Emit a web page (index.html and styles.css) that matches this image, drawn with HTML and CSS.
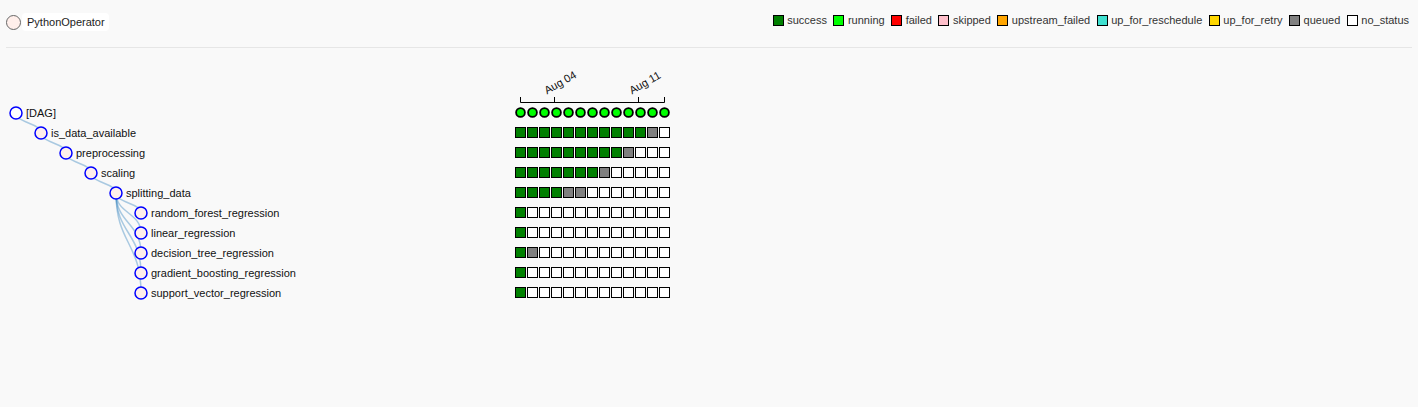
FILE: index.html
```html
<!DOCTYPE html>
<html lang="en">
<head>
<meta charset="utf-8">
<title>Tree View</title>
<link rel="stylesheet" href="styles.css">
</head>
<body>
<header class="top">
  <div class="op">
    <span class="op-dot"></span>
    <span class="op-name">PythonOperator</span>
  </div>
  <ul class="legend">
    <li class="item"><span class="sq st-success"></span>success</li>
    <li class="item"><span class="sq st-running"></span>running</li>
    <li class="item"><span class="sq st-failed"></span>failed</li>
    <li class="item"><span class="sq st-skipped"></span>skipped</li>
    <li class="item"><span class="sq st-upstream"></span>upstream_failed</li>
    <li class="item"><span class="sq st-resched"></span>up_for_reschedule</li>
    <li class="item"><span class="sq st-retry"></span>up_for_retry</li>
    <li class="item"><span class="sq st-queued"></span>queued</li>
    <li class="item"><span class="sq st-none"></span>no_status</li>
  </ul>
</header>
<hr class="rule">
<svg class="tree" width="1418" height="359" viewBox="0 48 1418 359">
  <g class="links">
    <path d="M16,113C16,123 41,123 41,133"/>
    <path d="M41,133C41,143 66,143 66,153"/>
    <path d="M66,153C66,163 91,163 91,173"/>
    <path d="M91,173C91,183 116,183 116,193"/>
    <path d="M116,193C116,203 141,203 141,213"/>
    <path d="M116,193C116,213 141,213 141,233"/>
    <path d="M116,193C116,223 141,223 141,253"/>
    <path d="M116,193C116,233 141,233 141,273"/>
    <path d="M116,193C116,243 141,243 141,293"/>
  </g>
  <g class="nodes">
    <circle class="node dag" cx="16" cy="113" r="6"/>
    <text class="label" x="26" y="117">[DAG]</text>
    <circle class="node" cx="41" cy="133" r="6"/>
    <text class="label" x="51" y="137">is_data_available</text>
    <circle class="node" cx="66" cy="153" r="6"/>
    <text class="label" x="76" y="157">preprocessing</text>
    <circle class="node" cx="91" cy="173" r="6"/>
    <text class="label" x="101" y="177">scaling</text>
    <circle class="node" cx="116" cy="193" r="6"/>
    <text class="label" x="126" y="197">splitting_data</text>
    <circle class="node" cx="141" cy="213" r="6"/>
    <text class="label" x="151" y="217">random_forest_regression</text>
    <circle class="node" cx="141" cy="233" r="6"/>
    <text class="label" x="151" y="237">linear_regression</text>
    <circle class="node" cx="141" cy="253" r="6"/>
    <text class="label" x="151" y="257">decision_tree_regression</text>
    <circle class="node" cx="141" cy="273" r="6"/>
    <text class="label" x="151" y="277">gradient_boosting_regression</text>
    <circle class="node" cx="141" cy="293" r="6"/>
    <text class="label" x="151" y="297">support_vector_regression</text>
  </g>
  <g class="axis">
    <path class="domain" d="M520.5,97V102.5H664.5V97"/>
    <path class="tick" d="M554.5,97V102.5M638.5,97V102.5"/>
    <text class="tick-label" transform="translate(547,94.5) rotate(-30)">Aug 04</text>
    <text class="tick-label" transform="translate(632,94.5) rotate(-30)">Aug 11</text>
  </g>
  <g class="runs">
    <circle class="run" cx="520.5" cy="112.5" r="4.4"/>
    <circle class="run" cx="532.5" cy="112.5" r="4.4"/>
    <circle class="run" cx="544.5" cy="112.5" r="4.4"/>
    <circle class="run" cx="556.5" cy="112.5" r="4.4"/>
    <circle class="run" cx="568.5" cy="112.5" r="4.4"/>
    <circle class="run" cx="580.5" cy="112.5" r="4.4"/>
    <circle class="run" cx="592.5" cy="112.5" r="4.4"/>
    <circle class="run" cx="604.5" cy="112.5" r="4.4"/>
    <circle class="run" cx="616.5" cy="112.5" r="4.4"/>
    <circle class="run" cx="628.5" cy="112.5" r="4.4"/>
    <circle class="run" cx="640.5" cy="112.5" r="4.4"/>
    <circle class="run" cx="652.5" cy="112.5" r="4.4"/>
    <circle class="run" cx="664.5" cy="112.5" r="4.4"/>
  </g>
  <g class="grid">
    <g transform="translate(515.5,127.5)">
      <rect class="ti ok" x="0" y="0"/><rect class="ti ok" x="12" y="0"/><rect class="ti ok" x="24" y="0"/><rect class="ti ok" x="36" y="0"/><rect class="ti ok" x="48" y="0"/><rect class="ti ok" x="60" y="0"/><rect class="ti ok" x="72" y="0"/><rect class="ti ok" x="84" y="0"/><rect class="ti ok" x="96" y="0"/><rect class="ti ok" x="108" y="0"/><rect class="ti ok" x="120" y="0"/><rect class="ti qd" x="132" y="0"/><rect class="ti no" x="144" y="0"/>
    </g>
    <g transform="translate(515.5,147.5)">
      <rect class="ti ok" x="0" y="0"/><rect class="ti ok" x="12" y="0"/><rect class="ti ok" x="24" y="0"/><rect class="ti ok" x="36" y="0"/><rect class="ti ok" x="48" y="0"/><rect class="ti ok" x="60" y="0"/><rect class="ti ok" x="72" y="0"/><rect class="ti ok" x="84" y="0"/><rect class="ti ok" x="96" y="0"/><rect class="ti qd" x="108" y="0"/><rect class="ti no" x="120" y="0"/><rect class="ti no" x="132" y="0"/><rect class="ti no" x="144" y="0"/>
    </g>
    <g transform="translate(515.5,167.5)">
      <rect class="ti ok" x="0" y="0"/><rect class="ti ok" x="12" y="0"/><rect class="ti ok" x="24" y="0"/><rect class="ti ok" x="36" y="0"/><rect class="ti ok" x="48" y="0"/><rect class="ti ok" x="60" y="0"/><rect class="ti ok" x="72" y="0"/><rect class="ti qd" x="84" y="0"/><rect class="ti no" x="96" y="0"/><rect class="ti no" x="108" y="0"/><rect class="ti no" x="120" y="0"/><rect class="ti no" x="132" y="0"/><rect class="ti no" x="144" y="0"/>
    </g>
    <g transform="translate(515.5,187.5)">
      <rect class="ti ok" x="0" y="0"/><rect class="ti ok" x="12" y="0"/><rect class="ti ok" x="24" y="0"/><rect class="ti ok" x="36" y="0"/><rect class="ti qd" x="48" y="0"/><rect class="ti qd" x="60" y="0"/><rect class="ti no" x="72" y="0"/><rect class="ti no" x="84" y="0"/><rect class="ti no" x="96" y="0"/><rect class="ti no" x="108" y="0"/><rect class="ti no" x="120" y="0"/><rect class="ti no" x="132" y="0"/><rect class="ti no" x="144" y="0"/>
    </g>
    <g transform="translate(515.5,207.5)">
      <rect class="ti ok" x="0" y="0"/><rect class="ti no" x="12" y="0"/><rect class="ti no" x="24" y="0"/><rect class="ti no" x="36" y="0"/><rect class="ti no" x="48" y="0"/><rect class="ti no" x="60" y="0"/><rect class="ti no" x="72" y="0"/><rect class="ti no" x="84" y="0"/><rect class="ti no" x="96" y="0"/><rect class="ti no" x="108" y="0"/><rect class="ti no" x="120" y="0"/><rect class="ti no" x="132" y="0"/><rect class="ti no" x="144" y="0"/>
    </g>
    <g transform="translate(515.5,227.5)">
      <rect class="ti ok" x="0" y="0"/><rect class="ti no" x="12" y="0"/><rect class="ti no" x="24" y="0"/><rect class="ti no" x="36" y="0"/><rect class="ti no" x="48" y="0"/><rect class="ti no" x="60" y="0"/><rect class="ti no" x="72" y="0"/><rect class="ti no" x="84" y="0"/><rect class="ti no" x="96" y="0"/><rect class="ti no" x="108" y="0"/><rect class="ti no" x="120" y="0"/><rect class="ti no" x="132" y="0"/><rect class="ti no" x="144" y="0"/>
    </g>
    <g transform="translate(515.5,247.5)">
      <rect class="ti ok" x="0" y="0"/><rect class="ti qd" x="12" y="0"/><rect class="ti no" x="24" y="0"/><rect class="ti no" x="36" y="0"/><rect class="ti no" x="48" y="0"/><rect class="ti no" x="60" y="0"/><rect class="ti no" x="72" y="0"/><rect class="ti no" x="84" y="0"/><rect class="ti no" x="96" y="0"/><rect class="ti no" x="108" y="0"/><rect class="ti no" x="120" y="0"/><rect class="ti no" x="132" y="0"/><rect class="ti no" x="144" y="0"/>
    </g>
    <g transform="translate(515.5,267.5)">
      <rect class="ti ok" x="0" y="0"/><rect class="ti no" x="12" y="0"/><rect class="ti no" x="24" y="0"/><rect class="ti no" x="36" y="0"/><rect class="ti no" x="48" y="0"/><rect class="ti no" x="60" y="0"/><rect class="ti no" x="72" y="0"/><rect class="ti no" x="84" y="0"/><rect class="ti no" x="96" y="0"/><rect class="ti no" x="108" y="0"/><rect class="ti no" x="120" y="0"/><rect class="ti no" x="132" y="0"/><rect class="ti no" x="144" y="0"/>
    </g>
    <g transform="translate(515.5,287.5)">
      <rect class="ti ok" x="0" y="0"/><rect class="ti no" x="12" y="0"/><rect class="ti no" x="24" y="0"/><rect class="ti no" x="36" y="0"/><rect class="ti no" x="48" y="0"/><rect class="ti no" x="60" y="0"/><rect class="ti no" x="72" y="0"/><rect class="ti no" x="84" y="0"/><rect class="ti no" x="96" y="0"/><rect class="ti no" x="108" y="0"/><rect class="ti no" x="120" y="0"/><rect class="ti no" x="132" y="0"/><rect class="ti no" x="144" y="0"/>
    </g>
  </g>
</svg>
</body>
</html>
```
FILE: styles.css
```css
html, body {
  margin: 0;
  padding: 0;
  background: #f9f9f9;
  font-family: "Liberation Sans", Arial, Helvetica, sans-serif;
  font-size: 11px;
  color: #333;
}

.top {
  box-sizing: border-box;
  height: 47px;
  padding: 13px 9px 0 6px;
  display: flex;
  justify-content: space-between;
  align-items: flex-start;
}

.op {
  display: flex;
  align-items: center;
  height: 18px;
}

.op-dot {
  width: 13px;
  height: 13px;
  border: 1px solid #666;
  border-radius: 50%;
  background: #ffefeb;
}

.op-name {
  margin-left: 1px;
  padding: 0 4px 0 5px;
  line-height: 18px;
  background: #fff;
  border-radius: 4px;
  color: #222;
}

.legend {
  list-style: none;
  margin: 0;
  padding: 0;
  display: flex;
  gap: 6.5px;
}

.item {
  display: flex;
  align-items: center;
  gap: 3.5px;
  line-height: 14px;
  color: #333;
}

.sq {
  width: 9px;
  height: 9px;
  border: 1px solid #000;
}

.st-success { background: #008000; }
.st-running { background: #00ff00; }
.st-failed { background: #ff0000; }
.st-skipped { background: #ffc0cb; }
.st-upstream { background: #ffa500; }
.st-resched { background: #40e0d0; }
.st-retry { background: #ffd700; }
.st-queued { background: #808080; }
.st-none { background: #fff; }

.rule {
  margin: 0 6px;
  height: 0;
  border: 0;
  border-top: 1px solid #e6e6e6;
}

.tree {
  display: block;
}

.links path {
  fill: none;
  stroke: #3182bd;
  stroke-opacity: 0.4;
  stroke-width: 1.5px;
}

.node {
  fill: #ffefeb;
  stroke: #0000ff;
  stroke-width: 1.5px;
}

.node.dag {
  fill: #fff;
}

.label {
  font-family: "Liberation Sans", Arial, Helvetica, sans-serif;
  font-size: 11px;
  fill: #111;
}

.axis .domain,
.axis .tick {
  fill: none;
  stroke: #000;
  stroke-width: 1px;
}

.tick-label {
  font-family: "Liberation Sans", Arial, Helvetica, sans-serif;
  font-size: 11px;
  fill: #111;
}

.run {
  fill: #00ff00;
  stroke: #000;
  stroke-width: 1.8px;
}

.ti {
  width: 10px;
  height: 10px;
  stroke: #000;
  stroke-width: 1px;
}

.ti.ok { fill: #008000; }
.ti.qd { fill: #808080; }
.ti.no { fill: #fff; }
```
